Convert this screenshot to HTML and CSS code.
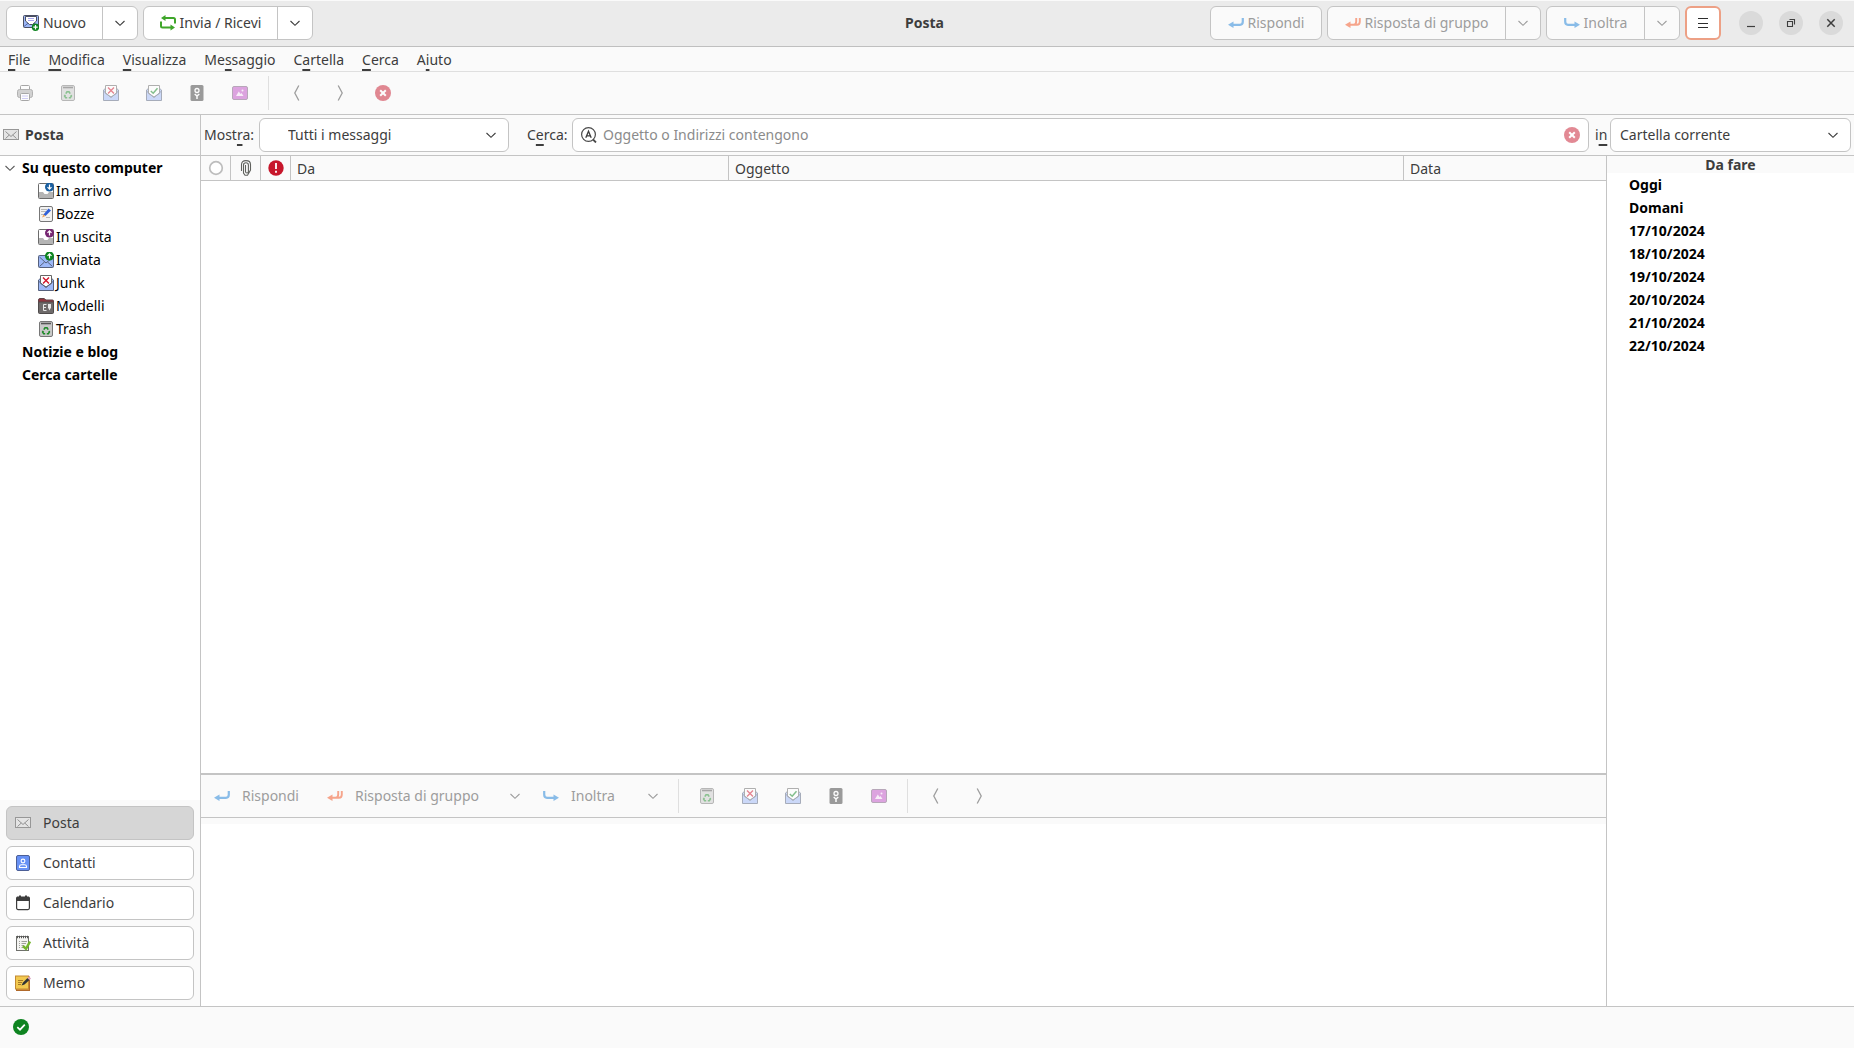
FILE: index.html
```html
<!DOCTYPE html>
<html lang="it">
  <head>
    <meta charset="UTF-8" />
    <meta name="viewport" content="width=device-width, initial-scale=1.0" />
    <title>Posta</title>
    <link rel="stylesheet" href="styles.css" />
  </head>

  <body>
    <!-- icon sprite -->
    <svg class="sprite" xmlns="http://www.w3.org/2000/svg">
      <symbol id="chevron" viewBox="0 0 16 16">
        <path d="M3.5 6 L8 10.3 L12.5 6" fill="none" stroke="currentColor" stroke-width="1.1" />
      </symbol>
      <symbol id="prev" viewBox="0 0 16 16">
        <path d="M9.8 0.5 L5.8 8 L9.8 15.5" fill="none" stroke="currentColor" stroke-width="1.3" />
      </symbol>
      <symbol id="next" viewBox="0 0 16 16">
        <path d="M6.2 0.5 L10.2 8 L6.2 15.5" fill="none" stroke="currentColor" stroke-width="1.3" />
      </symbol>
      <symbol id="mail-new" viewBox="0 0 16 16">
        <rect x="0.5" y="0.5" width="15" height="12" rx="1" fill="#9db8f8" stroke="#4a4f63" />
        <path d="M1 11.5 L6 7.5 M15 11.5 L10 7.5" stroke="#5568a8" fill="none" />
        <path d="M2.5 1.5 H13.5 V6 L9.5 9.5 H6.5 L2.5 6 Z" fill="#fff" stroke="#4a4f63" />
        <path d="M5 3.5 H11 M5 5.5 H11" stroke="#a9a6f0" />
        <circle cx="12.5" cy="12.2" r="3.7" fill="#0e8420" />
        <path d="M12.5 10 V14.4 M10.3 12.2 H14.7" stroke="#fff" stroke-width="1.2" />
      </symbol>
      <symbol id="sync" viewBox="0 0 16 16">
        <path d="M15 8.5 V4.5 Q15 3 13.500 3 H4 M1 6.500 V11 Q1 12.500 2.500 12.500 H12" fill="none" stroke="#3fa62a" stroke-width="2" />
        <path d="M5.500 0 L1 3 L5.500 6 Z M10.500 9.500 L15 12.500 L10.500 15.500 Z" fill="#3fa62a" />
      </symbol>
      <symbol id="reply" viewBox="0 0 16 16">
        <path d="M14.8 3 V6.5 Q14.8 9.8 12 9.8 H4" fill="none" stroke="#1a7fd8" stroke-width="2.2" />
        <path d="M0 9.8 L5.500 6.5 V13 Z" fill="#1a7fd8" />
      </symbol>
      <symbol id="reply-all" viewBox="0 0 16 16">
        <path d="M14.8 3 V6.5 Q14.8 9.800 12 9.800 H4 M11.200 3 V6.500 Q11.200 9.800 8.500 9.800" fill="none" stroke="#f4511e" stroke-width="1.900" />
        <path d="M0 9.800 L5.500 6.500 V13 Z" fill="#f4511e" />
      </symbol>
      <symbol id="forward" viewBox="0 0 16 16">
        <path d="M1.200 3 V6.500 Q1.200 9.800 4 9.800 H12" fill="none" stroke="#1a7fd8" stroke-width="2.2" />
        <path d="M16 9.800 L10.500 6.500 V13 Z" fill="#1a7fd8" />
      </symbol>
      <symbol id="print" viewBox="0 0 16 16">
        <rect x="3.500" y="0.500" width="9" height="5" rx="1" fill="#fff" stroke="#555" />
        <rect x="0.500" y="4.500" width="15" height="8" rx="2" fill="#a9a9a9" stroke="#6b6b6b" />
        <rect x="3.500" y="8.500" width="9" height="7" rx="1" fill="#fff" stroke="#555" />
        <path d="M5 11 H11 M5 13.500 H11" stroke="#a5a0f0" />
      </symbol>
      <symbol id="trash" viewBox="0 0 16 16">
        <rect x="1.500" y="0.500" width="13" height="15" rx="1.500" fill="#c9c9c9" stroke="#777" />
        <path d="M3 2.500 H13" stroke="#555" stroke-width="1.600" />
        <path d="M5.800 8.600 L7 6.800 H9 L10.200 8.600 M11 10 L11.400 11 L10.300 12.800 H8.800 M7.200 12.800 H5.700 L4.600 11 L5.300 9.800" fill="none" stroke="#1d8a28" stroke-width="1.600" />
      </symbol>
      <symbol id="junk" viewBox="0 0 16 16">
        <path d="M0.500 5 L3 3 H13 L15.500 5 V15.500 H0.500 Z" fill="#9db8f8" stroke="#55607c" />
        <path d="M2.500 0.500 H13.500 V8.500 L8 12 L2.500 8.500 Z" fill="#fff" stroke="#666" />
        <path d="M1 6.500 L8 12.500 L15 6.500" fill="none" stroke="#55607c" />
        <path d="M5 2.500 L11 8.500 M11 2.500 L5 8.500" stroke="#d0142c" stroke-width="1.400" />
      </symbol>
      <symbol id="not-junk" viewBox="0 0 16 16">
        <path d="M0.500 5 L3 3 H13 L15.500 5 V15.500 H0.500 Z" fill="#9db8f8" stroke="#55607c" />
        <path d="M2.500 0.500 H13.500 V8.500 L8 12 L2.500 8.500 Z" fill="#fff" stroke="#666" />
        <path d="M1 6.500 L8 12.500 L15 6.500" fill="none" stroke="#55607c" />
        <path d="M4.800 6 L7.200 8.200 L11.500 3.200" fill="none" stroke="#0e8420" stroke-width="1.500" />
      </symbol>
      <symbol id="label" viewBox="0 0 16 16">
        <rect x="1.500" y="0" width="13" height="16" rx="1.500" fill="#3d3d3d" />
        <circle cx="8" cy="5.500" r="2" fill="none" stroke="#fff" stroke-width="1.300" />
        <path d="M5.700 9 L8 11 L10.300 9 M8 11 V14" fill="none" stroke="#fff" stroke-width="1.500" />
      </symbol>
      <symbol id="image" viewBox="0 0 16 16">
        <rect x="0.500" y="1.500" width="15" height="13" rx="1.500" fill="#c04fc6" stroke="#77577a" />
        <path d="M4 11 L6.800 6.500 L8.500 9 L9.500 8 L11.500 11 Z" fill="#f6e1f7" />
        <circle cx="10.500" cy="5.500" r="1" fill="#f6e1f7" />
      </symbol>
      <symbol id="stop" viewBox="0 0 16 16">
        <circle cx="8" cy="8" r="8" fill="#c7162b" />
        <path d="M5.200 5.200 L10.800 10.800 M10.800 5.200 L5.200 10.800" stroke="#fff" stroke-width="2" />
      </symbol>
      <symbol id="mail" viewBox="0 0 16 16">
        <rect x="0.500" y="2.500" width="15" height="10" fill="#e4e4e4" stroke="#979797" />
        <path d="M2.500 4.500 L8 9.500 L13.500 4.500 M2.500 11.500 L6.300 8 M13.500 11.500 L9.700 8" fill="none" stroke="#929292" />
      </symbol>
      <symbol id="inbox" viewBox="0 0 16 16">
        <rect x="0.500" y="0.500" width="15" height="15" rx="1" fill="#fff" stroke="#6b6b6b" />
        <path d="M1 9 H5 L6.500 11 H9.500 L11 9 H15 V15 H1 Z" fill="#b4b4b4" />
        <circle cx="11.500" cy="4" r="4.500" fill="#1a5fa0" />
        <path d="M11.500 1.500 V6 M9.500 4.200 L11.500 6.200 L13.500 4.200" fill="none" stroke="#fff" stroke-width="1.200" />
      </symbol>
      <symbol id="outbox" viewBox="0 0 16 16">
        <rect x="0.500" y="0.500" width="15" height="15" rx="1" fill="#fff" stroke="#6b6b6b" />
        <path d="M1 9 H5 L6.500 11 H9.500 L11 9 H15 V15 H1 Z" fill="#b4b4b4" />
        <circle cx="11.500" cy="4" r="4.500" fill="#762572" />
        <path d="M11.500 6.500 V2 M9.500 3.800 L11.500 1.800 L13.500 3.800" fill="none" stroke="#fff" stroke-width="1.200" />
      </symbol>
      <symbol id="sent" viewBox="0 0 16 16">
        <rect x="0.500" y="3.500" width="15" height="12" rx="1" fill="#9db8f8" stroke="#55607c" />
        <path d="M1.500 5 L8 11 L14 6 M1.500 14.500 L6.500 10 M14.500 14.500 L9.500 10" fill="none" stroke="#55607c" />
        <circle cx="11.500" cy="4" r="4.500" fill="#0e8420" />
        <path d="M11.500 6.500 V2 M9.500 3.800 L11.500 1.800 L13.500 3.800" fill="none" stroke="#fff" stroke-width="1.200" />
      </symbol>
      <symbol id="draft" viewBox="0 0 16 16">
        <rect x="1.500" y="0.500" width="13" height="15" rx="1.500" fill="#f2f2f2" stroke="#777" />
        <path d="M3 3.500 H9 M3 5.500 H8 M3 8.500 H6 M8 11.500 H12" stroke="#b8b8b8" />
        <path d="M5.500 8.500 L10.500 2.500 L13 4.500 L7.500 10 Z" fill="#2e5fd8" />
        <path d="M5.500 8.500 L4 11.500 L7.500 10 Z" fill="#f0a050" />
      </symbol>
      <symbol id="template" viewBox="0 0 16 16">
        <path d="M0.500 2 Q0.500 0.500 2 0.500 H6 L8 2 H14.500 Q15.500 2 15.500 3 V14 H0.500 Z" fill="#92353f" stroke="#5e4548" />
        <rect x="0.500" y="4" width="15" height="11.500" rx="1" fill="#6e6a6a" stroke="#4f4b4b" />
        <path d="M8.500 6.500 H5.500 V12.500 H8.500 M5.500 9.500 H8" fill="none" stroke="#e8e8e8" />
        <path d="M10 6 H13 V9.500 L11.500 12.500 L10 9.500 Z" fill="#e8e8e8" />
      </symbol>
      <symbol id="contacts" viewBox="0 0 16 16">
        <rect x="1.500" y="0.500" width="13" height="15" rx="1.500" fill="#6791f5" stroke="#4c5f96" />
        <circle cx="8" cy="6" r="1.900" fill="none" stroke="#fff" stroke-width="1.100" />
        <path d="M4.500 12.500 V11.500 Q4.500 9.700 6.500 9.700 H9.500 Q11.500 9.700 11.500 11.500 V12.500 Z" fill="none" stroke="#fff" stroke-width="1.100" />
      </symbol>
      <symbol id="calendar" viewBox="0 0 16 16">
        <rect x="1.600" y="2.600" width="12.800" height="12" rx="1.500" fill="#fff" stroke="#3d3d3d" stroke-width="1.200" />
        <path d="M1 6 V3 L2 1.500 H14 L15 3 V6 Z" fill="#3d3d3d" />
        <path d="M5 0.500 V2 M11 0.500 V2" stroke="#3d3d3d" stroke-width="2" />
      </symbol>
      <symbol id="tasks" viewBox="0 0 16 16">
        <rect x="1.500" y="1.500" width="12" height="14" fill="#f4f4f2" stroke="#6f706c" />
        <path d="M2 2 H13" stroke="#555" stroke-width="2.400" stroke-dasharray="1 1" />
        <path d="M4 6.500 H5 M6.500 6.500 H12 M4 8.500 H5 M6.500 8.500 H11 M4 10.500 H5 M6.500 10.500 H9 M4 12.500 H5 M6.500 12.500 H8" stroke="#a0a09c" />
        <path d="M8 11 L11 13.800 L15 6.500" fill="none" stroke="#73b52c" stroke-width="2.400" />
      </symbol>
      <symbol id="memo" viewBox="0 0 16 16">
        <rect x="1.500" y="2" width="13" height="13.500" fill="#d98f3c" stroke="#b0692a" />
        <rect x="0.500" y="1" width="13" height="13" fill="#f2c94f" stroke="#c28a33" />
        <path d="M3 5.500 H8 M3 7.500 H7 M3 9.500 H6" stroke="#a67a28" />
        <path d="M6.500 10.500 L8 7.500 L12.500 3 L14.500 5 L9.500 9.500 Z" fill="#2f3436" />
        <path d="M12.500 3 L14 1.500 L16 3.500 L14.500 5 Z" fill="#d9a0c0" />
      </symbol>
      <symbol id="search" viewBox="0 0 16 16">
        <circle cx="7.500" cy="7.500" r="6.900" fill="#fff" stroke="#4a4a4a" stroke-width="1.200" />
        <path d="M12 12.500 L15 15.500" stroke="#4a4a4a" stroke-width="1.800" />
        <path d="M4.800 10.800 L7.500 4.300 L10.200 10.800 M6 8.800 H9" fill="none" stroke="#3d3d3d" stroke-width="1.300" />
      </symbol>
      <symbol id="unread" viewBox="0 0 16 16">
        <circle cx="8" cy="8" r="6.300" fill="#fff" stroke="#bdbdbd" stroke-width="1.700" />
      </symbol>
      <symbol id="attach" viewBox="0 0 16 16">
        <path d="M3.500 11 V4.500 Q3.500 0.600 8 0.600 Q12.500 0.600 12.500 4.500 V10 L9.500 15.300 H7 L5.500 13 V5 Q5.500 2.700 8 2.700 Q10.400 2.700 10.400 5 V11.500 Q10.400 13 9 13 Q7.500 13 7.500 11.500 V5" fill="none" stroke="#60625e" stroke-width="1.100" />
      </symbol>
      <symbol id="important" viewBox="0 0 16 16">
        <circle cx="8" cy="8" r="7.700" fill="#c7162b" />
        <path d="M8 3 V9 M8 10.800 V12.800" stroke="#fff" stroke-width="1.800" />
      </symbol>
      <symbol id="online" viewBox="0 0 16 16">
        <circle cx="8" cy="8" r="8" fill="#0e8420" />
        <path d="M4.300 8.200 L7 10.700 L11.800 5.600" fill="none" stroke="#fff" stroke-width="1.700" />
      </symbol>
      <symbol id="menu" viewBox="0 0 16 16">
        <path d="M3 3.500 H13 M3 8.500 H13 M3 12.500 H13" stroke="#2d2d2d" stroke-width="1" />
      </symbol>
      <symbol id="minimize" viewBox="0 0 16 16">
        <path d="M4 11.500 H12" stroke="#3d3d3d" stroke-width="1.200" />
      </symbol>
      <symbol id="restore" viewBox="0 0 16 16">
        <path d="M4.500 6.500 H9.500 V11.500 H4.500 Z M6.500 4.500 H11.500 V9.500" fill="none" stroke="#3d3d3d" stroke-width="1.100" />
      </symbol>
      <symbol id="close" viewBox="0 0 16 16">
        <path d="M4.300 4.300 L11.700 11.700 M11.700 4.300 L4.300 11.700" stroke="#3d3d3d" stroke-width="1.500" />
      </symbol>
    </svg>

    <header class="titlebar">
      <div class="title-left">
        <div class="split">
          <button class="btn new"><svg class="icon"><use href="#mail-new" /></svg>Nuovo</button>
          <button class="btn arrow" aria-label="Altri tipi"><svg class="icon"><use href="#chevron" /></svg></button>
        </div>
        <div class="split">
          <button class="btn sync"><svg class="icon"><use href="#sync" /></svg>Invia / Ricevi</button>
          <button class="btn arrow" aria-label="Altri account"><svg class="icon"><use href="#chevron" /></svg></button>
        </div>
      </div>
      <h1 class="title">Posta</h1>
      <div class="title-right">
        <div class="split">
          <button class="btn reply" disabled><svg class="icon"><use href="#reply" /></svg>Rispondi</button>
        </div>
        <div class="split">
          <button class="btn group" disabled><svg class="icon"><use href="#reply-all" /></svg>Risposta di gruppo</button>
          <button class="btn arrow" aria-label="Altre risposte" disabled><svg class="icon"><use href="#chevron" /></svg></button>
        </div>
        <div class="split">
          <button class="btn forward" disabled><svg class="icon"><use href="#forward" /></svg>Inoltra</button>
          <button class="btn arrow" aria-label="Altri inoltri" disabled><svg class="icon"><use href="#chevron" /></svg></button>
        </div>
        <div class="split focused">
          <button class="btn menu" aria-label="Menu"><svg class="icon"><use href="#menu" /></svg></button>
        </div>
        <div class="window-buttons">
          <button aria-label="Minimizza"><svg class="icon"><use href="#minimize" /></svg></button>
          <button aria-label="Ripristina"><svg class="icon"><use href="#restore" /></svg></button>
          <button aria-label="Chiudi"><svg class="icon"><use href="#close" /></svg></button>
        </div>
      </div>
    </header>

    <nav class="menubar">
      <a href="#"><u>F</u>ile</a>
      <a href="#"><u>M</u>odifica</a>
      <a href="#"><u>V</u>isualizza</a>
      <a href="#">Me<u>s</u>saggio</a>
      <a href="#">C<u>a</u>rtella</a>
      <a href="#"><u>C</u>erca</a>
      <a href="#">A<u>i</u>uto</a>
    </nav>

    <div class="toolbar">
      <button class="tool" aria-label="Stampa" disabled><svg class="icon"><use href="#print" /></svg></button>
      <button class="tool" aria-label="Elimina" disabled><svg class="icon"><use href="#trash" /></svg></button>
      <button class="tool" aria-label="Junk" disabled><svg class="icon"><use href="#junk" /></svg></button>
      <button class="tool" aria-label="Non junk" disabled><svg class="icon"><use href="#not-junk" /></svg></button>
      <button class="tool" aria-label="Etichetta" disabled><svg class="icon"><use href="#label" /></svg></button>
      <button class="tool" aria-label="Carica immagini" disabled><svg class="icon"><use href="#image" /></svg></button>
      <span class="separator"></span>
      <button class="tool nav" aria-label="Precedente" disabled><svg class="icon"><use href="#prev" /></svg></button>
      <button class="tool nav" aria-label="Successivo" disabled><svg class="icon"><use href="#next" /></svg></button>
      <button class="tool" aria-label="Annulla" disabled><svg class="icon"><use href="#stop" /></svg></button>
    </div>

    <div class="workspace">
      <aside class="sidebar">
        <div class="sidebar-title"><svg class="icon"><use href="#mail" /></svg>Posta</div>
        <ul class="tree">
          <li class="account"><svg class="icon"><use href="#chevron" /></svg>Su questo computer</li>
          <li class="folder"><svg class="icon"><use href="#inbox" /></svg>In arrivo</li>
          <li class="folder"><svg class="icon"><use href="#draft" /></svg>Bozze</li>
          <li class="folder"><svg class="icon"><use href="#outbox" /></svg>In uscita</li>
          <li class="folder"><svg class="icon"><use href="#sent" /></svg>Inviata</li>
          <li class="folder"><svg class="icon"><use href="#junk" /></svg>Junk</li>
          <li class="folder"><svg class="icon"><use href="#template" /></svg>Modelli</li>
          <li class="folder"><svg class="icon"><use href="#trash" /></svg>Trash</li>
          <li class="account closed">Notizie e blog</li>
          <li class="account closed">Cerca cartelle</li>
        </ul>
        <div class="switcher">
          <button class="active"><svg class="icon"><use href="#mail" /></svg>Posta</button>
          <button><svg class="icon"><use href="#contacts" /></svg>Contatti</button>
          <button><svg class="icon"><use href="#calendar" /></svg>Calendario</button>
          <button><svg class="icon"><use href="#tasks" /></svg>Attività</button>
          <button><svg class="icon"><use href="#memo" /></svg>Memo</button>
        </div>
      </aside>

      <main class="main">
        <form class="searchbar">
          <label class="show-label" for="show">Most<u>r</u>a:</label>
          <select id="show" class="show">
            <option>Tutti i messaggi</option>
          </select>
          <label class="search-label" for="search-text">C<u>e</u>rca:</label>
          <div class="search">
            <svg class="icon"><use href="#search" /></svg>
            <input id="search-text" type="text" placeholder="Oggetto o Indirizzi contengono" />
            <button type="button" class="clear" aria-label="Pulisci" disabled><svg class="icon"><use href="#stop" /></svg></button>
          </div>
          <label class="scope-label" for="scope">i<u>n</u></label>
          <select id="scope" class="scope">
            <option>Cartella corrente</option>
          </select>
        </form>

        <div class="content">
          <div class="mail">
            <div class="message-list">
              <table>
                <thead>
                  <tr>
                    <th class="col-icon"><svg class="icon"><use href="#unread" /></svg></th>
                    <th class="col-icon"><svg class="icon"><use href="#attach" /></svg></th>
                    <th class="col-icon"><svg class="icon"><use href="#important" /></svg></th>
                    <th class="col-from">Da</th>
                    <th>Oggetto</th>
                    <th class="col-date">Data</th>
                  </tr>
                </thead>
              </table>
            </div>
            <section class="preview">
              <div class="toolbar">
                <button class="tool text reply" disabled><svg class="icon"><use href="#reply" /></svg>Rispondi</button>
                <button class="tool text group" disabled><svg class="icon"><use href="#reply-all" /></svg>Risposta di gruppo</button>
                <button class="tool more" aria-label="Altre risposte" disabled><svg class="icon"><use href="#chevron" /></svg></button>
                <button class="tool text forward" disabled><svg class="icon"><use href="#forward" /></svg>Inoltra</button>
                <button class="tool more" aria-label="Altri inoltri" disabled><svg class="icon"><use href="#chevron" /></svg></button>
                <span class="separator"></span>
                <button class="tool" aria-label="Elimina" disabled><svg class="icon"><use href="#trash" /></svg></button>
                <button class="tool" aria-label="Junk" disabled><svg class="icon"><use href="#junk" /></svg></button>
                <button class="tool" aria-label="Non junk" disabled><svg class="icon"><use href="#not-junk" /></svg></button>
                <button class="tool" aria-label="Etichetta" disabled><svg class="icon"><use href="#label" /></svg></button>
                <button class="tool" aria-label="Carica immagini" disabled><svg class="icon"><use href="#image" /></svg></button>
                <span class="separator"></span>
                <button class="tool nav" aria-label="Precedente" disabled><svg class="icon"><use href="#prev" /></svg></button>
                <button class="tool nav" aria-label="Successivo" disabled><svg class="icon"><use href="#next" /></svg></button>
              </div>
              <div class="preview-body"></div>
            </section>
          </div>

          <aside class="todo">
            <h2>Da fare</h2>
            <ul>
              <li>Oggi</li>
              <li>Domani</li>
              <li>17/10/2024</li>
              <li>18/10/2024</li>
              <li>19/10/2024</li>
              <li>20/10/2024</li>
              <li>21/10/2024</li>
              <li>22/10/2024</li>
            </ul>
          </aside>
        </div>
      </main>
    </div>

    <footer class="statusbar"><svg class="icon"><use href="#online" /></svg></footer>
  </body>
</html>
```

FILE: styles.css
```css
* {
  box-sizing: border-box;
}

body {
  margin: 0;
  height: 100vh;
  display: flex;
  flex-direction: column;
  overflow: hidden;
  background: #fafafa;
  color: #3d3d3d;
  font-family: "Noto Sans", sans-serif;
  font-size: 14px;
  line-height: 20px;
}

button,
input,
select {
  font: inherit;
  color: inherit;
  margin: 0;
}

button {
  display: flex;
  align-items: center;
  border: none;
  background: none;
  padding: 0;
  white-space: nowrap;
}

ul {
  list-style: none;
  margin: 0;
  padding: 0;
}

u {
  text-decoration-thickness: 2px;
  text-underline-offset: 4px;
  text-decoration-skip-ink: none;
}

.sprite {
  display: none;
}

.icon {
  width: 16px;
  height: 16px;
  flex: none;
  display: block;
  overflow: visible;
}

/* title bar */
.titlebar {
  flex: none;
  height: 47px;
  display: grid;
  grid-template-columns: 1fr auto 1fr;
  align-items: center;
  padding: 0 11px 1px 6px;
  background: #ebebeb;
  border-top: 1px solid #fafafa;
  border-bottom: 1px solid #bfbfbf;
}

.title {
  margin: 0;
  font-size: 14px;
  font-weight: bold;
}

.title-left,
.title-right {
  display: flex;
  align-items: center;
  gap: 5px;
}

.title-right {
  justify-content: flex-end;
}

.split {
  display: flex;
  height: 34px;
  background: #fff;
  border: 1px solid #c4c4c4;
  border-radius: 6px;
}

.split:has(:disabled) {
  background: #fafafa;
}

.split.focused {
  border: 2px solid #eda085;
}

.btn {
  justify-content: center;
  gap: 4px;
}

.btn + .btn {
  border-left: 1px solid #c4c4c4;
}

.btn.new {
  width: 95px;
}

.btn.sync {
  width: 133px;
}

.btn.reply {
  width: 110px;
}

.btn.group {
  width: 177px;
}

.btn.forward {
  width: 97px;
}

.btn.arrow {
  width: 35px;
}

.btn.menu {
  width: 32px;
}

.btn:disabled {
  color: #9d9d9d;
}

.btn:disabled .icon,
.tool:disabled .icon,
.clear:disabled .icon {
  opacity: 0.5;
}

.btn.arrow:disabled .icon,
.tool.more:disabled .icon,
.tool.nav:disabled .icon {
  opacity: 1;
}

.window-buttons {
  display: flex;
  gap: 16px;
  margin-left: 13px;
}

.window-buttons button {
  width: 24px;
  height: 24px;
  justify-content: center;
  border-radius: 50%;
  background: #dadada;
}

/* menu bar */
.menubar {
  flex: none;
  height: 25px;
  display: flex;
  gap: 18px;
  align-items: center;
  padding: 2px 8px 0;
  border-bottom: 1px solid #dfdfdf;
}

.menubar a {
  color: inherit;
  text-decoration: none;
}

/* tool bars */
.toolbar {
  flex: none;
  height: 43px;
  display: flex;
  align-items: center;
  padding: 0 3px;
  border-bottom: 1px solid #c4c4c4;
}

.tool {
  width: 43px;
  height: 34px;
  justify-content: center;
}

.tool:disabled {
  color: #9d9d9d;
}

.tool.text {
  justify-content: flex-start;
  gap: 12px;
  padding-left: 10px;
}

.tool.reply {
  width: 113px;
}

.tool.group {
  width: 180px;
}

.tool.forward {
  width: 102px;
}

.tool.more {
  width: 36px;
}

.separator {
  width: 1px;
  height: 34px;
  margin: 0 6px 0 7px;
  background: #dfdfdf;
}

.workspace {
  flex: 1;
  min-height: 0;
  display: flex;
}

/* sidebar */
.sidebar {
  width: 201px;
  flex: none;
  display: flex;
  flex-direction: column;
  border-right: 1px solid #c4c4c4;
}

.sidebar-title {
  height: 41px;
  display: flex;
  align-items: center;
  gap: 6px;
  padding-left: 3px;
  font-weight: bold;
  border-bottom: 1px solid #c4c4c4;
}

.tree {
  flex: 1;
  background: #fff;
  color: #000;
}

.tree li {
  height: 23px;
  display: flex;
  align-items: center;
}

.account {
  gap: 4px;
  padding-left: 2px;
  font-weight: bold;
}

.account .icon {
  color: #5a5a5a;
}

.tree .closed {
  padding-left: 22px;
}

.folder {
  gap: 2px;
  padding-left: 38px;
}

.switcher {
  display: flex;
  flex-direction: column;
  gap: 6px;
  padding: 6px;
}

.switcher button {
  height: 34px;
  gap: 12px;
  padding-left: 8px;
  background: #fff;
  border: 1px solid #c4c4c4;
  border-radius: 6px;
}

.switcher .active {
  background: #d6d6d6;
}

/* search row */
.main {
  flex: 1;
  min-width: 0;
  display: flex;
  flex-direction: column;
}

.searchbar {
  flex: none;
  height: 41px;
  display: flex;
  align-items: center;
  padding: 0 3px;
  border-bottom: 1px solid #c4c4c4;
}

.searchbar select,
.search {
  height: 34px;
  background-color: #fff;
  border: 1px solid #c4c4c4;
  border-radius: 6px;
}

.searchbar select {
  appearance: none;
  background-image: url("data:image/svg+xml,%3Csvg xmlns='http://www.w3.org/2000/svg' width='16' height='16'%3E%3Cpath d='M3.500 6 L8 10.300 L12.500 6' fill='none' stroke='%233d3d3d' stroke-width='1.100'/%3E%3C/svg%3E");
  background-repeat: no-repeat;
  background-position: right 9px center;
}

.show-label {
  width: 55px;
}

.searchbar .show {
  width: 250px;
  padding-left: 28px;
}

.search-label {
  width: 63px;
  padding-left: 18px;
}

.search {
  flex: 1;
  display: flex;
  align-items: center;
  gap: 6px;
  padding: 0 8px;
}

.search input {
  flex: 1;
  min-width: 0;
  border: none;
  padding: 0;
  background: none;
  outline: none;
}

.search input::placeholder {
  color: #8b8b8b;
}

.scope-label {
  width: 21px;
  padding-left: 6px;
}

.searchbar .scope {
  width: 241px;
  padding-left: 9px;
}

/* messages and preview */
.content {
  flex: 1;
  min-height: 0;
  display: flex;
}

.mail {
  flex: 1;
  min-width: 0;
  display: flex;
  flex-direction: column;
  border-right: 1px solid #c4c4c4;
}

.message-list {
  flex: 1;
  background: #fff;
}

.message-list table {
  width: 100%;
  table-layout: fixed;
  border-collapse: separate;
  border-spacing: 0;
  background: #fafafa;
}

.message-list th {
  height: 25px;
  padding: 2px 6px 0;
  font-weight: normal;
  text-align: left;
  border-right: 1px solid #c4c4c4;
  border-bottom: 1px solid #c4c4c4;
}

.message-list th:last-child {
  border-right: none;
}

.message-list .col-icon {
  width: 30px;
  padding: 0 7px;
}

.message-list .col-from {
  width: 438px;
}

.message-list .col-date {
  width: 202px;
}

.preview {
  flex: none;
  height: 233px;
  display: flex;
  flex-direction: column;
  border-top: 2px solid #c4c4c4;
}

.preview-body {
  flex: 1;
  margin-top: 6px;
  background: #fff;
}

/* to do */
.todo {
  width: 247px;
  flex: none;
  display: flex;
  flex-direction: column;
}

.todo h2 {
  margin: 0;
  font-size: 14px;
  line-height: 17px;
  text-align: center;
}

.todo ul {
  flex: 1;
  padding-left: 22px;
  background: #fff;
  color: #000;
  font-weight: bold;
}

.todo li {
  line-height: 23px;
}

.statusbar {
  flex: none;
  height: 42px;
  display: flex;
  align-items: center;
  padding: 0 0 2px 13px;
  border-top: 1px solid #c4c4c4;
}
```
